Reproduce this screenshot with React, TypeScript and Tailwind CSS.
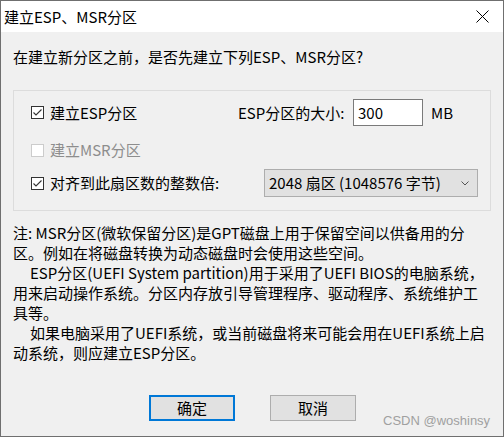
import React from "react";

// 复选框（选中 / 未选中 / 禁用）
function CheckBox({ checked, disabled }: { checked?: boolean; disabled?: boolean }) {
  return (
    <span
      className={
        "flex h-[13px] w-[13px] shrink-0 items-center justify-center border bg-white " +
        (disabled ? "border-[#cccccc]" : "border-[#333333]")
      }
    >
      {checked && (
        <svg width="11" height="11" viewBox="0 0 11 11">
          <path d="M1.5 5.5 L4 8 L9.5 2.5" fill="none" stroke="#333333" strokeWidth="1.1" />
        </svg>
      )}
    </span>
  );
}

export default function App() {
  const font = "font-['Noto_Sans_CJK_SC','Noto_Sans_CJK_JP',sans-serif]";

  return (
    <div
      className={`relative flex h-[437px] w-[504px] flex-col border border-[#6f6f6f] bg-[#f0f0f0] text-[15px] text-black ${font}`}
    >
      {/* 标题栏 */}
      <div className="flex h-[31px] shrink-0 items-center justify-between bg-white pl-[3px] pr-[14px]">
        <span className="leading-[20px]">建立ESP、MSR分区</span>
        <svg width="13" height="13" viewBox="0 0 13 13">
          <path d="M0.5 0.5 L12.5 12.5 M12.5 0.5 L0.5 12.5" stroke="#000" strokeWidth="1" />
        </svg>
      </div>

      {/* 内容 */}
      <div className="flex flex-col pl-[12px] pt-[15px]">
        <p className="leading-[20px]">在建立新分区之前，是否先建立下列ESP、MSR分区?</p>

        <div className="mt-[23px] flex h-[121px] w-[478px] flex-col border border-[#dcdcdc] pl-[17px] pt-[8px]">
          <div className="flex h-[27px] items-center">
            <div className="flex w-[207px] items-center">
              <CheckBox checked />
              <span className="ml-[6px] leading-[20px]">建立ESP分区</span>
            </div>
            <span className="w-[115px] leading-[20px]">ESP分区的大小:</span>
            <div className="flex h-[27px] w-[70px] items-center border border-[#7a7a7a] bg-white pl-[4px] leading-[20px]">
              300
            </div>
            <span className="ml-[8px] leading-[20px]">MB</span>
          </div>

          <div className="mt-[14px] flex h-[20px] items-center">
            <CheckBox disabled />
            <span className="ml-[6px] leading-[20px] text-[#8d8d8d]">建立MSR分区</span>
          </div>

          <div className="mt-[9px] flex h-[28px] items-center">
            <div className="flex w-[233px] items-center">
              <CheckBox checked />
              <span className="ml-[6px] leading-[20px]">对齐到此扇区数的整数倍:</span>
            </div>
            <div className="flex h-[28px] w-[214px] items-center justify-between border border-[#adadad] bg-[#e1e1e1] pl-[4px] pr-[8px]">
              <span className="leading-[20px]">2048 扇区 (1048576 字节)</span>
              <svg width="8" height="5" viewBox="0 0 8 5">
                <path d="M0.5 0.5 L4 4 L7.5 0.5" fill="none" stroke="#555" strokeWidth="1" />
              </svg>
            </div>
          </div>
        </div>

        {/* 说明文字 */}
        <div className="mt-[12px] flex flex-col whitespace-nowrap leading-[20px]">
          <span>注: MSR分区(微软保留分区)是GPT磁盘上用于保留空间以供备用的分</span>
          <span>区。例如在将磁盘转换为动态磁盘时会使用这些空间。</span>
          <span className="pl-[17px]">ESP分区(UEFI System partition)用于采用了UEFI BIOS的电脑系统，</span>
          <span>用来启动操作系统。分区内存放引导管理程序、驱动程序、系统维护工</span>
          <span>具等。</span>
          <span className="pl-[17px]">如果电脑采用了UEFI系统，或当前磁盘将来可能会用在UEFI系统上启</span>
          <span>动系统，则应建立ESP分区。</span>
        </div>

        {/* 按钮 */}
        <div className="mt-[32px] flex gap-[35px] pl-[136px]">
          <button className="flex h-[26px] w-[86px] items-center justify-center border-2 border-[#0078d7] bg-[#e1e1e1] leading-[20px]">
            确定
          </button>
          <button className="flex h-[26px] w-[86px] items-center justify-center border border-[#adadad] bg-[#e1e1e1] leading-[20px]">
            取消
          </button>
        </div>
      </div>

      {/* 水印 */}
      <span className="absolute left-[382px] top-[412px] font-['Liberation_Sans',sans-serif] text-[13px] leading-[16px] text-[#a0a0a0]">
        CSDN @woshinsy
      </span>
    </div>
  );
}
